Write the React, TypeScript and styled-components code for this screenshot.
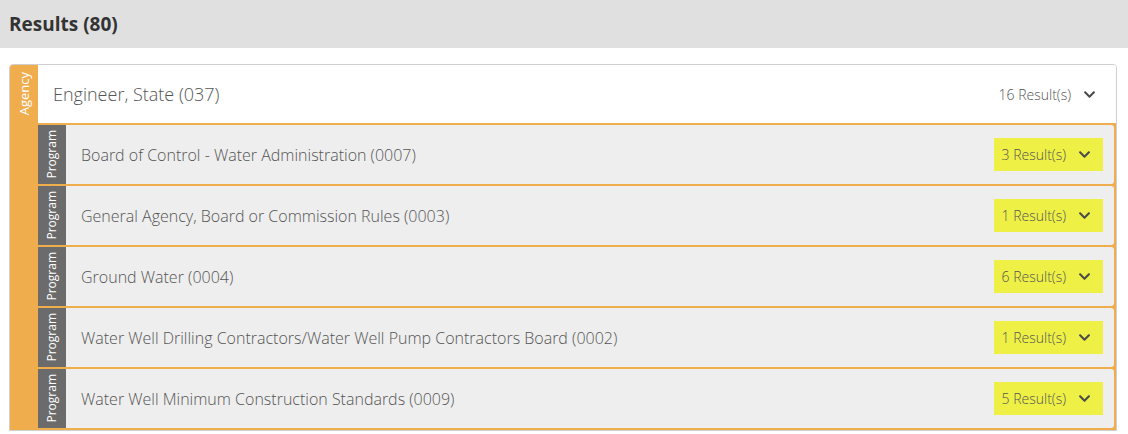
import React from 'react'
import styled, { createGlobalStyle } from 'styled-components'
import { FaChevronDown } from 'react-icons/fa'

const GlobalStyle = createGlobalStyle`
  html, body {
    margin: 0;
    padding: 0;
    background: #fff;
    font-family: "Open Sans", "Liberation Sans", sans-serif;
  }
`

const TitleBar = styled.div`
  height: 48px;
  background: #e0e0e0;
  display: flex;
  align-items: center;
  padding: 0 9px;
  box-sizing: border-box;
`

const Title = styled.h2`
  margin: 0;
  font-size: 19px;
  font-weight: 700;
  color: #333;
`

const Content = styled.div`
  padding: 16px 11px 0 9px;
`

const Card = styled.div`
  display: flex;
  border: 1px solid #cfcfcf;
  border-radius: 4px 4px 0 0;
  overflow: hidden;
`

const SideLabel = styled.div<{ $bg: string; $top: number; $size: number }>`
  width: 28px;
  flex: none;
  background: ${({ $bg }) => $bg};
  color: #fff;
  font-size: ${({ $size }) => $size}px;
  display: flex;
  justify-content: center;
  align-items: flex-start;
  padding-top: ${({ $top }) => $top}px;
  box-sizing: border-box;

  span {
    writing-mode: vertical-rl;
    transform: rotate(180deg);
    line-height: 28px;
  }
`

const Body = styled.div`
  flex: 1;
  display: flex;
  flex-direction: column;
`

const AgencyHead = styled.div`
  height: 58px;
  display: flex;
  align-items: center;
  justify-content: space-between;
  padding: 0 20px 0 15px;
  background: #fff;
`

const AgencyName = styled.div`
  font-size: 18px;
  font-weight: 300;
  color: #555;
`

const Count = styled.div<{ $highlight?: boolean }>`
  display: flex;
  align-items: center;
  gap: 12px;
  font-size: 14px;
  font-weight: 300;
  color: #555;
  padding: ${({ $highlight }) => ($highlight ? '0 12px 0 8px' : '0')};
  height: ${({ $highlight }) => ($highlight ? '33px' : 'auto')};
  background: ${({ $highlight }) => ($highlight ? '#eef046' : 'transparent')};

  svg {
    color: #4a4a4a;
  }
`

const Programs = styled.div`
  background: #f0ad4e;
  display: flex;
  flex-direction: column;
  gap: 2px;
  padding: 2px 2px 2px 0;
`

const ProgramRow = styled.div`
  display: flex;
  height: 59px;
  background: #eeeeee;
  border-radius: 0 3px 3px 0;
`

const ProgramMain = styled.div`
  flex: 1;
  display: flex;
  align-items: center;
  justify-content: space-between;
  padding: 0 11px 0 15px;
`

const ProgramName = styled.div`
  font-size: 16px;
  font-weight: 300;
  color: #555;
`

const programs = [
  { name: 'Board of Control - Water Administration (0007)', count: 3 },
  { name: 'General Agency, Board or Commission Rules (0003)', count: 1 },
  { name: 'Ground Water (0004)', count: 6 },
  { name: 'Water Well Drilling Contractors/Water Well Pump Contractors Board (0002)', count: 1 },
  { name: 'Water Well Minimum Construction Standards (0009)', count: 5 },
]

export default function App() {
  return (
    <>
      <GlobalStyle />
      <TitleBar>
        <Title>Results (80)</Title>
      </TitleBar>
      <Content>
        <Card>
          <SideLabel $bg="#f0ad4e" $top={7} $size={13}>
            <span>Agency</span>
          </SideLabel>
          <Body>
            <AgencyHead>
              <AgencyName>Engineer, State (037)</AgencyName>
              <Count>
                16 Result(s) <FaChevronDown size={13} />
              </Count>
            </AgencyHead>
            <Programs>
              {programs.map((p) => (
                <ProgramRow key={p.name}>
                  <SideLabel $bg="#6b6b6b" $top={5} $size={12}>
                    <span>Program</span>
                  </SideLabel>
                  <ProgramMain>
                    <ProgramName>{p.name}</ProgramName>
                    <Count $highlight>
                      {p.count} Result(s) <FaChevronDown size={13} />
                    </Count>
                  </ProgramMain>
                </ProgramRow>
              ))}
            </Programs>
          </Body>
        </Card>
      </Content>
    </>
  )
}
